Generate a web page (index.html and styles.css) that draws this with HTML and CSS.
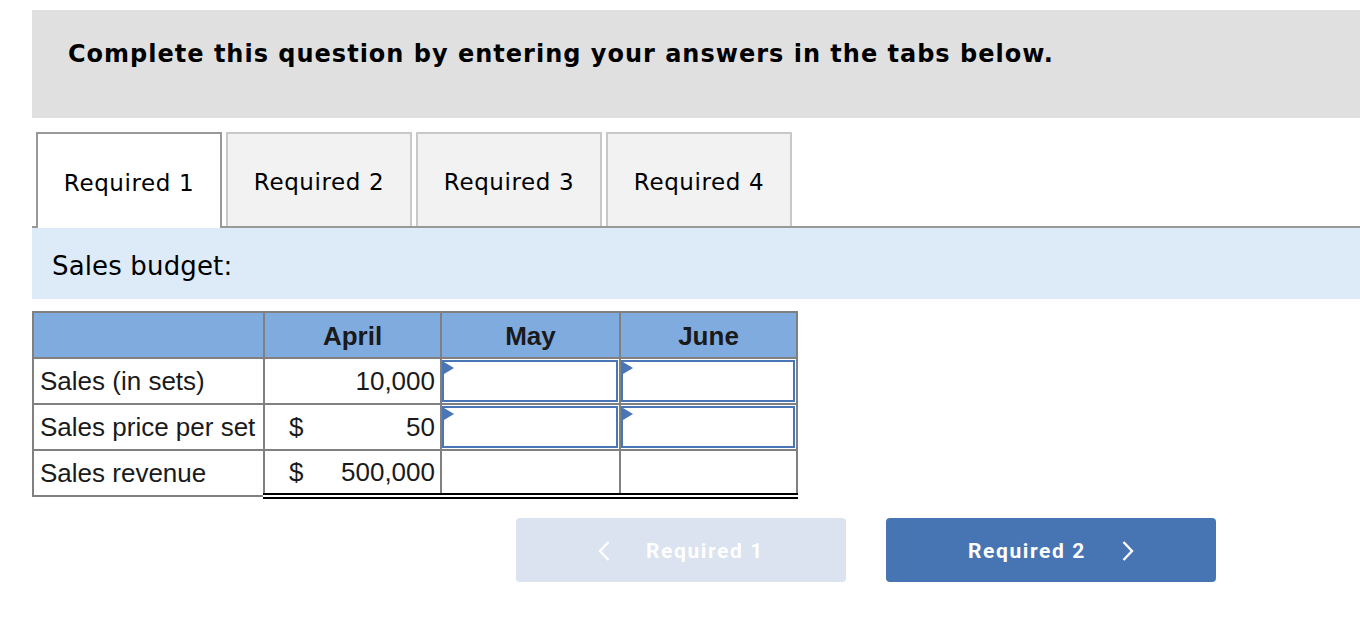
FILE: index.html
```html
<!DOCTYPE html>
<html>
<head>
<meta charset="utf-8">
<link rel="stylesheet" href="styles.css">
</head>
<body>
<div class="page">
  <div class="instructions">Complete this question by entering your answers in the tabs below.</div>
  <div class="tabs">
    <div class="tab active">Required 1</div>
    <div class="tab">Required 2</div>
    <div class="tab">Required 3</div>
    <div class="tab">Required 4</div>
  </div>
  <div class="section-title">Sales budget:</div>
  <table class="budget">
    <colgroup>
      <col class="c-label"><col class="c-april"><col class="c-may"><col class="c-june">
    </colgroup>
    <thead>
      <tr><th></th><th>April</th><th>May</th><th>June</th></tr>
    </thead>
    <tbody>
      <tr>
        <td class="label">Sales (in sets)</td>
        <td class="num"><span class="cur"></span><span class="val">10,000</span></td>
        <td class="inp"><div class="box"></div></td>
        <td class="inp"><div class="box"></div></td>
      </tr>
      <tr>
        <td class="label">Sales price per set</td>
        <td class="num"><span class="cur">$</span><span class="val">50</span></td>
        <td class="inp"><div class="box"></div></td>
        <td class="inp"><div class="box"></div></td>
      </tr>
      <tr class="total">
        <td class="label">Sales revenue</td>
        <td class="num"><span class="cur">$</span><span class="val">500,000</span></td>
        <td class="empty"></td>
        <td class="empty"></td>
      </tr>
    </tbody>
  </table>
  <div class="nav">
    <div class="btn prev">
      <svg class="chev" width="12" height="20" viewBox="0 0 12 20"><polyline points="10.5,1 2,10 10.5,19" fill="none" stroke="#fff" stroke-width="2.4"/></svg>
      <span>Required 1</span>
    </div>
    <div class="btn next">
      <span>Required 2</span>
      <svg class="chev" width="12" height="20" viewBox="0 0 12 20"><polyline points="1.5,1 10,10 1.5,19" fill="none" stroke="#fff" stroke-width="2.4"/></svg>
    </div>
  </div>
</div>
</body>
</html>
```
FILE: styles.css
```css
* { box-sizing: border-box; }
html, body { margin: 0; padding: 0; background: #fff; }
body { font-family: "DejaVu Sans", Verdana, sans-serif; color: #000; }

.page { padding: 10px 0 0 32px; }

.instructions {
  background: #e0e0e0;
  height: 108px;
  padding: 30px 0 0 36px;
  font-weight: bold;
  font-size: 24px;
  line-height: 28px;
  letter-spacing: 1px;
}

.tabs {
  margin-top: 14px;
  display: flex;
  gap: 4px;
  padding-left: 4px;
  border-bottom: 2px solid #999;
  height: 96px;
  align-items: flex-start;
}
.tab {
  width: 186px;
  height: 94px;
  background: #f2f2f2;
  border: 2px solid #c8c8c8;
  border-bottom: none;
  display: flex;
  align-items: center;
  justify-content: center;
  font-size: 23px;
  letter-spacing: 0.6px;
  padding-top: 4px;
}
.tab.active {
  background: #fff;
  border-color: #999;
  height: 96px;
  position: relative;
  z-index: 1;
}

.section-title {
  background: #ddebf8;
  height: 71px;
  display: flex;
  align-items: center;
  padding-left: 20px;
  padding-top: 4px;
  font-size: 26px;
  letter-spacing: 0.15px;
}

.budget {
  margin-top: 12px;
  border-collapse: collapse;
  table-layout: fixed;
  width: 764px;
  font-family: "Liberation Sans", Arial, sans-serif;
  font-size: 26px;
  color: #1a1a1a;
}
.c-label { width: 231px; }
.c-april { width: 177px; }
.c-may { width: 179px; }
.c-june { width: 177px; }

.budget th, .budget td {
  border: 2px solid #808080;
  height: 46px;
  padding: 0;
}
.budget th {
  background: #80abdf;
  font-weight: bold;
  text-align: center;
  color: #1a1a1a;
  padding-top: 2px;
}
.budget td.label { padding-left: 6px; white-space: nowrap; }
.budget td.num { padding: 0 5px 0 24px; }
.budget td.num .cur { float: left; }
.budget td.num .val { float: right; }
.budget td.inp { padding: 1px 1px 1px 0; }
.box {
  position: relative;
  height: 42px;
  border: 2px solid #4a76b8;
  background: #fff;
}
.box::before {
  content: "";
  position: absolute;
  top: 0;
  left: 0;
  border-left: 10px solid #4a76b8;
  border-top: 6px solid transparent;
  border-bottom: 6px solid transparent;
}
.total td.num, .total td.empty {
  border-top: 2px solid #000;
  border-bottom: 6px double #000;
}

.nav {
  margin-top: 19px;
  margin-left: 484px;
  display: flex;
  gap: 40px;
}
.btn {
  width: 330px;
  height: 64px;
  border-radius: 4px;
  display: flex;
  align-items: center;
  justify-content: center;
  gap: 36px;
  color: #fff;
  font-family: Roboto, "Liberation Sans", sans-serif;
  font-weight: bold;
  font-size: 21px;
  letter-spacing: 1.6px;
  padding-top: 2px;
}
.btn.prev { background: #dae3ef; }
.btn.next { background: #4775b3; }
.chev { display: block; }
```
